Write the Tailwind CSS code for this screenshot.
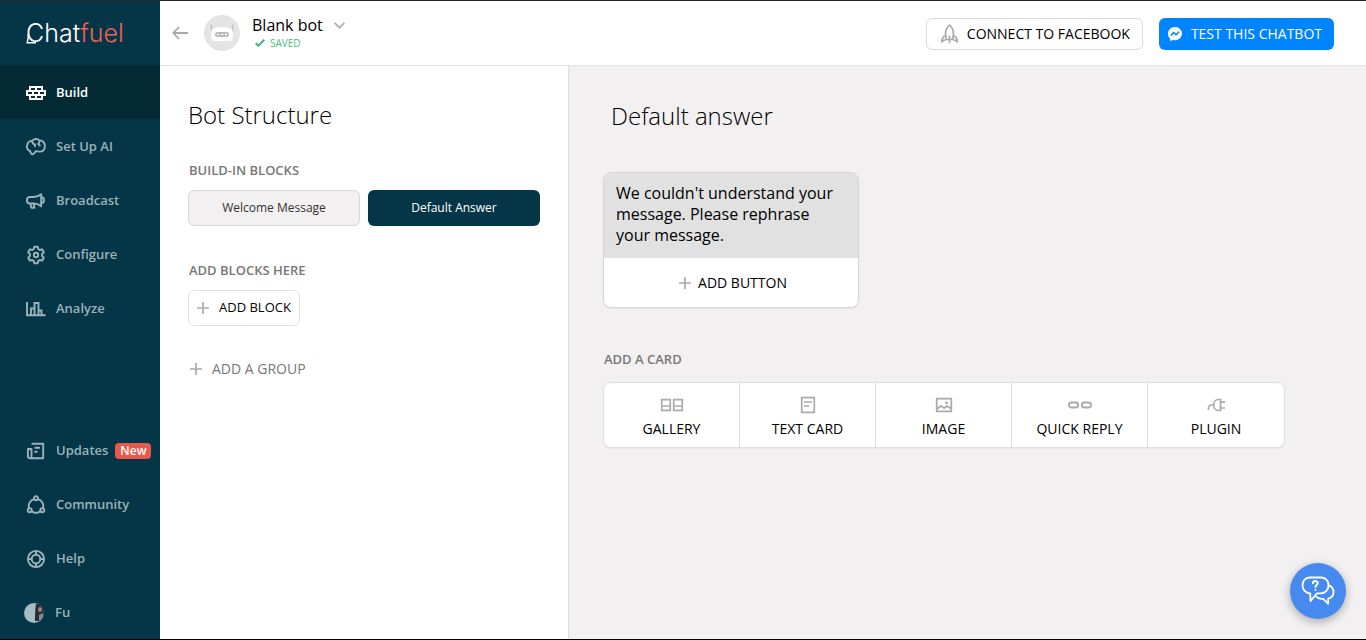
<!DOCTYPE html>
<html lang="en">
<head>
<meta charset="utf-8">
<meta name="viewport" content="width=device-width, initial-scale=1">
<title>Chatfuel</title>
<script src="https://cdn.jsdelivr.net/npm/@tailwindcss/browser@4"></script>
</head>
<body class="flex min-h-screen border-t border-b border-t-[#26252a] border-b-black bg-[#f2f0f1] font-['Open_Sans',sans-serif] text-black">

<aside class="flex w-40 shrink-0 flex-col bg-[#053647] text-[13px] font-semibold text-[#9bb2ba]">
  <a href="#" aria-label="Chatfuel" class="relative flex h-16 items-center pl-[26px] font-['Inter',sans-serif] text-[25px] leading-8 font-light text-white">
    <span>Chat</span><span class="text-[#ee6352]">fuel</span>
    <svg class="absolute left-[26px] top-[31px]" width="10" height="12" viewBox="0 0 10 12" fill="none" stroke="#fff" stroke-width="1.500"><path d="M2.200 2v4L1.200 10.700H10"/></svg>
  </a>
  <nav class="flex flex-1 flex-col">
    <a href="#" class="flex h-[54px] items-center gap-[10px] bg-[#042a36] pt-px pl-[26px] text-white">
      <svg width="20" height="16" viewBox="0 0 20 16" fill="none" stroke="currentColor" stroke-width="2"><path d="M4 2h12v4H4zM1 6h18v4H1zM4 10h12v4H4zM10 2v4M7 6v4M13 6v4M10 10v4"/></svg>
      Build</a>
    <a href="#" class="flex h-[54px] items-center gap-[10px] pt-px pl-[26px]">
      <svg width="20" height="18" viewBox="0 0 20 18" fill="none" stroke="currentColor" stroke-width="1.900" stroke-linecap="round" stroke-linejoin="round"><path d="M6.500 2.900C7.400.4 12 .4 13.200 2.400c3.500-.3 5.900 2.600 5.700 5.800-.1 3.500-2.300 5.900-5.400 5.400-1.700 0-2.700-.6-3.700-.3-1.100.9-1.500 2.900-3.300 3-1.800 0-2-1.800-2.400-3.300C1.600 12.300.4 9.800 1.200 7.200 1.400 4.400 3.600 2.600 6.500 2.900zM6.500 3.200C6 5 7 6.300 9 6.300M9 6.300v2M13.200 2.600c.4 1.500 0 2.700-1 3.500M12.200 6.100l1.600 1.300"/></svg>
      Set Up AI</a>
    <a href="#" class="flex h-[54px] items-center gap-[10px] pt-px pl-[26px]">
      <svg width="20" height="16" viewBox="0 0 20 16" fill="none" stroke="currentColor" stroke-width="1.900" stroke-linejoin="round"><path d="M15.200 1.300v11.900c-2.500-2-4.400-2.700-7.400-2.700H4C-.1 10.500-.1 4 4 4h3.800c3 0 4.900-.7 7.400-2.700zM15.400 4.300c3.400.2 3.400 5.600 0 5.800M4.500 10.600l.7 4.100h3.200l-.7-4"/></svg>
      Broadcast</a>
    <a href="#" class="flex h-[54px] items-center gap-[10px] pt-px pl-[26px]">
      <svg width="20" height="20" viewBox="0 0 20 20" fill="none" stroke="currentColor" stroke-width="1.900" stroke-linejoin="round"><path d="M8.300 1.800h3.400l.6 2.300 1.500.9 2.300-.7 1.700 3-1.700 1.700v2l1.700 1.700-1.700 3-2.300-.7-1.500.9-.6 2.300H8.300l-.6-2.300-1.500-.9-2.300.7-1.700-3L3.900 11V9L2.200 7.300l1.700-3 2.300.7 1.500-.9z"/><circle cx="10" cy="10" r="2.200"/></svg>
      Configure</a>
    <a href="#" class="flex h-[54px] items-center gap-[10px] pt-px pl-[26px]">
      <svg width="20" height="16" viewBox="0 0 20 16" fill="none" stroke="currentColor" stroke-width="1.900"><path d="M1 1v13.200h18.500M5 14V7.500h3.500V14M8.500 14V2h4v12M12.500 9.500h3V14"/></svg>
      Analyze</a>
    <a href="#" class="mt-auto flex h-[54px] items-center pt-px pl-[26px]">
      <svg width="20" height="18" viewBox="0 0 20 18" fill="none" stroke="currentColor" stroke-width="1.900" stroke-linejoin="round"><path d="M5.500 1.700h11.700v14.500H4.200c-1.500 0-2.300-.6-2.300-2V7h3.600v9M8.500 5.700h5.500M8.500 9.700h3"/></svg>
      <span class="pl-[10px]">Updates</span>
      <span class="ml-[7px] rounded bg-[#e9594b] px-[5px] text-xs leading-4 text-white">New</span></a>
    <a href="#" class="flex h-[54px] items-center gap-[10px] pt-px pl-[26px]">
      <svg width="20" height="20" viewBox="0 0 20 20" fill="none" stroke="currentColor" stroke-width="1.900"><circle cx="10" cy="3.300" r="2"/><circle cx="3.700" cy="15.300" r="2"/><circle cx="16.300" cy="15.300" r="2"/><path d="M7.900 4.200C3.700 5.500 1.900 9.500 3.100 13.300M12.100 4.200c4.200 1.300 6 5.300 4.800 9.100M5.600 16.200c2.600 2 6.200 2 8.800 0"/></svg>
      Community</a>
    <a href="#" class="flex h-[54px] items-center gap-[10px] pt-px pl-[26px]">
      <svg width="20" height="20" viewBox="0 0 20 20" fill="none" stroke="currentColor" stroke-width="1.900"><circle cx="10" cy="10" r="8.100"/><circle cx="10" cy="10" r="4.300"/><path d="M10 2v4M10 14v4M2 10h4M14 10h4"/></svg>
      Help</a>
    <a href="#" class="flex h-[54px] items-center gap-[11px] pt-px pl-6">
      <svg width="20" height="20" viewBox="0 0 20 20"><defs><clipPath id="av"><circle cx="10" cy="10" r="10"/></clipPath></defs><g clip-path="url(#av)"><path fill="#a6bcc4" d="M0 0h20v20H0z"/><path fill="#2b2d33" d="M12 1h5l3 5v12h-9c0-5 0-12 1-17z"/><ellipse cx="16" cy="6.500" rx="1.800" ry="2.600" fill="#a58a80"/><path fill="#7e8b92" d="M15 12l4-2v8h-4z"/></g></svg>
      Fu</a>
  </nav>
</aside>

<div class="flex min-w-0 flex-1 flex-col">
  <header class="flex h-[65px] items-center border-b border-[#e3e2e2] bg-white pr-8 pl-3">
    <button type="button" aria-label="Back" class="mr-4">
      <svg width="16" height="14" viewBox="0 0 16 14" fill="none" stroke="#a9a9a9" stroke-width="1.800"><path d="M16 7H1.500M7 1L1.300 7 7 13"/></svg>
    </button>
    <svg class="mr-3 shrink-0" width="36" height="36" viewBox="0 0 36 36"><circle cx="18" cy="18" r="18" fill="#e4e4e4"/><path d="M7.500 9.500v9M28.500 9.500v9" stroke="#bdbdbd" stroke-width="1.200"/><path fill="#fff" d="M8 14.500c2-3 18-3 20 0 1.700 3 1.500 10-1.500 11.500H9.500C6.500 24.500 6.300 17.500 8 14.500z"/><rect x="11" y="17" width="14" height="5" rx="2.500" fill="#b9b9b9"/><circle cx="14" cy="19.500" r="1" fill="#fff"/><circle cx="22" cy="19.500" r="1" fill="#fff"/><path d="M16.500 19.500h3" stroke="#fff"/></svg>
    <div class="flex flex-col">
      <button type="button" class="flex items-center gap-[11px] text-base leading-5">Blank bot
        <svg width="11" height="7" viewBox="0 0 11 7" fill="none" stroke="#b0b0b0" stroke-width="1.700"><path d="M.6.8l4.900 4.900L10.400.8"/></svg></button>
      <span class="flex items-center gap-[5px] pl-[3px] text-[10px] leading-4 text-[#4dbb7f]">
        <svg width="10" height="8" viewBox="0 0 10 8" fill="none" stroke="#3fb476" stroke-width="2"><path d="M.7 4.200l2.600 2.500L9.300.8"/></svg>SAVED</span>
    </div>
    <div class="ml-auto flex gap-4 pt-0.5 text-sm">
      <button type="button" class="flex h-8 items-center rounded-md border border-[#d9d9d9] bg-white pr-3 pl-[14px]">
        <svg class="mr-[9px]" width="17" height="20" viewBox="0 0 17 20" fill="none" stroke="#aaa" stroke-width="1.700" stroke-linejoin="round"><path d="M5.500 15.500C3.800 10 4.500 4.500 8.500 1.200c4 3.300 4.700 8.800 3 14.300zM4.600 11.500C2 12.500.8 14.500.8 18c1-1.600 2.700-2.200 4.700-2.500M12.400 11.500c2.600 1 3.800 3 3.800 6.500-1-1.600-2.700-2.200-4.700-2.500M8.500 11.500V19"/></svg>
        CONNECT TO FACEBOOK</button>
      <button type="button" class="flex h-8 items-center rounded-md bg-[#0084ff] pr-3 pl-[9px] text-white">
        <svg class="mr-[9px]" width="14" height="14" viewBox="0 0 14 14"><path fill="#fff" d="M7 0c4 0 7 2.900 7 6.600s-3 6.600-7 6.600c-.8 0-1.500-.1-2.200-.3L2 14v-2.200C.7 10.500 0 8.800 0 6.600 0 2.900 3 0 7 0z"/><path fill="none" stroke="#0084ff" stroke-width="1.500" d="M2.800 8.500L5.800 5.500l2.300 2.200 3.100-2.900"/></svg>
        TEST THIS CHATBOT</button>
    </div>
  </header>

  <div class="flex flex-1">
    <section class="w-[409px] shrink-0 border-r border-[#e0dfdf] bg-white px-7 pt-8">
      <h1 class="text-2xl leading-[34px] font-light">Bot Structure</h1>
      <h2 class="mt-[30px] pl-px text-[13px] leading-4 font-semibold text-[#777]">BUILD-IN BLOCKS</h2>
      <div class="mt-3 grid grid-cols-2 gap-2 text-xs">
        <button type="button" class="h-9 rounded-md border border-[#d8d6d7] bg-[#f2f0f1] text-[#333]">Welcome Message</button>
        <button type="button" class="h-9 rounded-md bg-[#053647] text-white">Default Answer</button>
      </div>
      <h2 class="mt-9 pl-px text-[13px] leading-4 font-semibold text-[#777]">ADD BLOCKS HERE</h2>
      <button type="button" class="mt-3 flex h-9 items-center gap-[10px] rounded-md border border-[#e2e2e2] px-2 text-[13px]">
        <svg width="12" height="12" viewBox="0 0 12 12" stroke="#aaa" stroke-width="1.700"><path d="M6 0v12M0 6h12"/></svg>ADD BLOCK</button>
      <button type="button" class="mt-8 flex items-center gap-[10px] pl-[2px] text-sm leading-[22px] text-[#777]">
        <svg width="12" height="12" viewBox="0 0 12 12" stroke="#aaa" stroke-width="1.700"><path d="M6 0v12M0 6h12"/></svg>ADD A GROUP</button>
    </section>

    <main class="min-w-0 flex-1 px-[34px] pt-8">
      <h1 class="pl-2 text-2xl leading-9 font-light">Default answer</h1>
      <article class="mt-[38px] w-64 overflow-hidden rounded-lg border border-[#d6d5d5] bg-white shadow-xs">
        <p class="bg-[#e1e1e1] px-3 pt-[10px] pb-3 text-base leading-[21px]">We couldn't understand your message. Please rephrase your message.</p>
        <button type="button" class="flex h-[49px] w-full items-center justify-center gap-[7px] pl-1 text-sm">
          <svg width="12" height="12" viewBox="0 0 12 12" stroke="#aaa" stroke-width="1.700"><path d="M6 0v12M0 6h12"/></svg>ADD BUTTON</button>
      </article>
      <h2 class="mt-[43px] pl-px text-[13px] leading-4 font-semibold text-[#777]">ADD A CARD</h2>
      <div class="mt-[15px] grid max-w-[682px] grid-cols-5 divide-x divide-[#dcdbdb] overflow-hidden rounded-lg border border-[#e0dfdf] bg-white text-sm shadow-xs">
        <button type="button" class="flex h-16 flex-col items-center justify-center gap-1 pt-1">
          <svg width="24" height="20" viewBox="0 0 24 20" fill="none" stroke="#aaa" stroke-width="1.700"><path d="M1.700 4.700h8.600v10.600H1.700zM1.700 11h8.600M13.700 4.700h8.600v10.600h-8.600zM13.700 11h8.600"/></svg>GALLERY</button>
        <button type="button" class="flex h-16 flex-col items-center justify-center gap-1 pt-1">
          <svg width="24" height="20" viewBox="0 0 24 20" fill="none" stroke="#aaa" stroke-width="1.700"><path d="M5.700 2.700h12.600v14.600H5.700zM8 7h8M8 11h5"/></svg>TEXT CARD</button>
        <button type="button" class="flex h-16 flex-col items-center justify-center gap-1 pt-1">
          <svg width="24" height="20" viewBox="0 0 24 20" fill="none" stroke="#aaa" stroke-width="1.700"><path d="M4.700 3.700h14.600v12.600H4.700zM5 14l4.300-3.200 2.700 2.400 3-2.200 4 2.500"/><circle cx="14.500" cy="7.800" r="1" fill="#aaa" stroke-width="1"/></svg>IMAGE</button>
        <button type="button" class="flex h-16 flex-col items-center justify-center gap-1 pt-1">
          <svg width="24" height="20" viewBox="0 0 24 20" fill="none" stroke="#aaa" stroke-width="1.900"><rect x="1" y="7.500" width="9.200" height="5" rx="2.500"/><rect x="13.800" y="7.500" width="9.200" height="5" rx="2.500"/></svg>QUICK REPLY</button>
        <button type="button" class="flex h-16 flex-col items-center justify-center gap-1 pt-1">
          <svg width="24" height="20" viewBox="0 0 24 20" fill="none" stroke="#aaa" stroke-width="1.700"><path d="M16.500 4.500v11h-2c-6.500 0-6.500-11 0-11zM16.500 7.200h4.500M16.500 13h4.500M9.500 10H7.500c-2 0-3.200 1.500-3.200 5"/></svg>PLUGIN</button>
      </div>
    </main>
  </div>
</div>

<button type="button" aria-label="Support chat" class="fixed right-5 bottom-[21px] flex size-14 items-center justify-center rounded-full bg-[#468af0] shadow-[0_3px_10px_rgba(0,0,0,0.3)]">
  <svg width="34" height="30" viewBox="0 0 34 30" fill="none" stroke="#fff" stroke-width="1.800" stroke-linejoin="round" stroke-linecap="round"><path d="M9 1.500h11c4.500 0 7.500 3.200 7.500 7.500 0 4.700-3 8.300-7.500 8.300h-4L9.500 25l-.3-7.600C4.500 17 1.500 13.500 1.500 9.300 1.500 4.800 4.500 1.500 9 1.500z"/><path d="M28 9.300c3 1.300 4.500 4 4.500 6.700 0 3.300-2 6-5.300 6.600v5.200l-5-5c-2.700.2-4.900-.3-6.700-2"/><path d="M12 7.200c.2-3 5-2.600 4.700.2-.2 1.600-2.200 1.800-2.200 3.600M14.500 14v.1" stroke-width="2"/></svg>
</button>
</body>
</html>
